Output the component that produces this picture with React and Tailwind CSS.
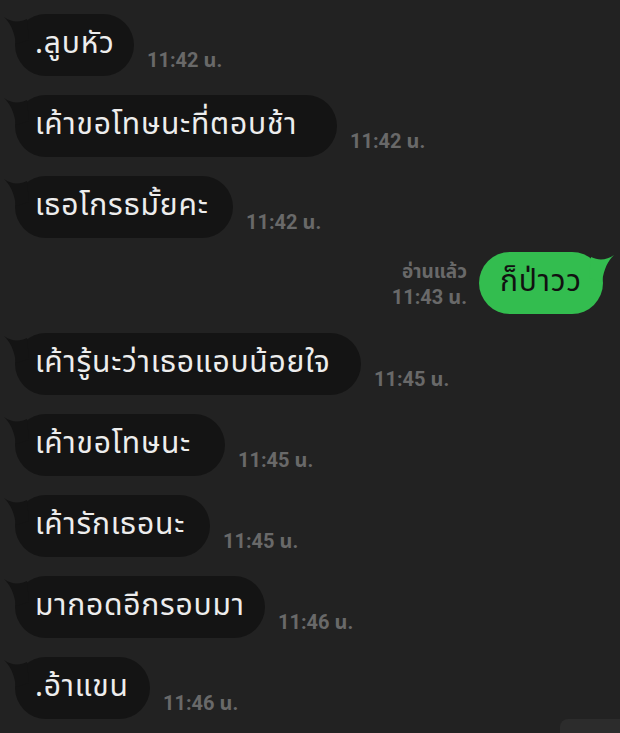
import React from "react";

const messages = [
  { text: ".ลูบหัว", time: "11:42 น.", w: "w-[119px]" },
  { text: "เค้าขอโทษนะที่ตอบช้า", time: "11:42 น.", w: "w-[322px]" },
  { text: "เธอโกรธมั้ยคะ", time: "11:42 น.", w: "w-[218px]" },
  { text: "ก็ป่าวว", time: "11:43 น.", mine: true, read: "อ่านแล้ว", w: "w-[124px]" },
  { text: "เค้ารู้นะว่าเธอแอบน้อยใจ", time: "11:45 น.", w: "w-[346px]" },
  { text: "เค้าขอโทษนะ", time: "11:45 น.", w: "w-[210px]" },
  { text: "เค้ารักเธอนะ", time: "11:45 น.", w: "w-[195px]" },
  { text: "มากอดอีกรอบมา", time: "11:46 น.", w: "w-[250px]" },
  { text: ".อ้าแขน", time: "11:46 น.", w: "w-[135px]" },
];

const thai = { fontFamily: '"Noto Sans Thai", "Noto Sans", sans-serif' };
const meta = { fontFamily: 'Roboto, "Noto Sans Thai", "Noto Sans", sans-serif' };

// little curved horn on the top corner of a bubble
const Tail = ({ right, color }) => (
  <svg
    className={
      "absolute top-0 w-[30px] h-[34px] " + (right ? "right-[-12px] -scale-x-100" : "left-[-12px]")
    }
    viewBox="-12 0 30 34"
  >
    <path d="M-11 3 C-4 8 4 9 12 5 L14 26 L1 30 C-1 16 -5 9 -11 3 Z" fill={color} />
  </svg>
);

const Received = ({ text, time, w }) => (
  <div className="flex items-end gap-[13px]">
    <div className={"relative h-[62px] rounded-full bg-[#141414] px-[20px] flex items-center shrink-0 " + w}>
      <Tail color="#141414" />
      <span className="relative text-[30px] tracking-[0.8px] text-[#ededed] leading-none pb-[2px] whitespace-nowrap" style={thai}>
        {text}
      </span>
    </div>
    <span className="mb-[6px] text-[20px] font-bold text-[#696969] leading-none" style={meta}>
      {time}
    </span>
  </div>
);

const Sent = ({ text, time, read, w }) => (
  <div className="flex items-end justify-end gap-[12px] pr-[17px] -mt-[5px]">
    <div className="flex flex-col items-end mb-[7px] text-[#696969] font-bold leading-none" style={meta}>
      <span className="text-[19px] mb-[6px]">{read}</span>
      <span className="text-[20px]">{time}</span>
    </div>
    <div className={"relative h-[62px] rounded-full bg-[#33bd4f] px-[21px] flex items-center shrink-0 " + w}>
      <Tail right color="#33bd4f" />
      <span className="relative text-[30px] tracking-[0.8px] text-[#111] leading-none pb-[2px] whitespace-nowrap" style={thai}>
        {text}
      </span>
    </div>
  </div>
);

export default function App() {
  return (
    <div className="relative min-h-[733px] h-[733px] overflow-hidden bg-[#222222] pt-[14px] pl-[15px] flex flex-col gap-[19px]">
      {messages.map((m, i) =>
        m.mine ? <Sent key={i} {...m} /> : <Received key={i} {...m} />
      )}
      <div className="absolute left-[560px] top-[719px] w-[60px] h-[20px] rounded-tl-[8px] bg-[#2c2c2c]" />
    </div>
  );
}
